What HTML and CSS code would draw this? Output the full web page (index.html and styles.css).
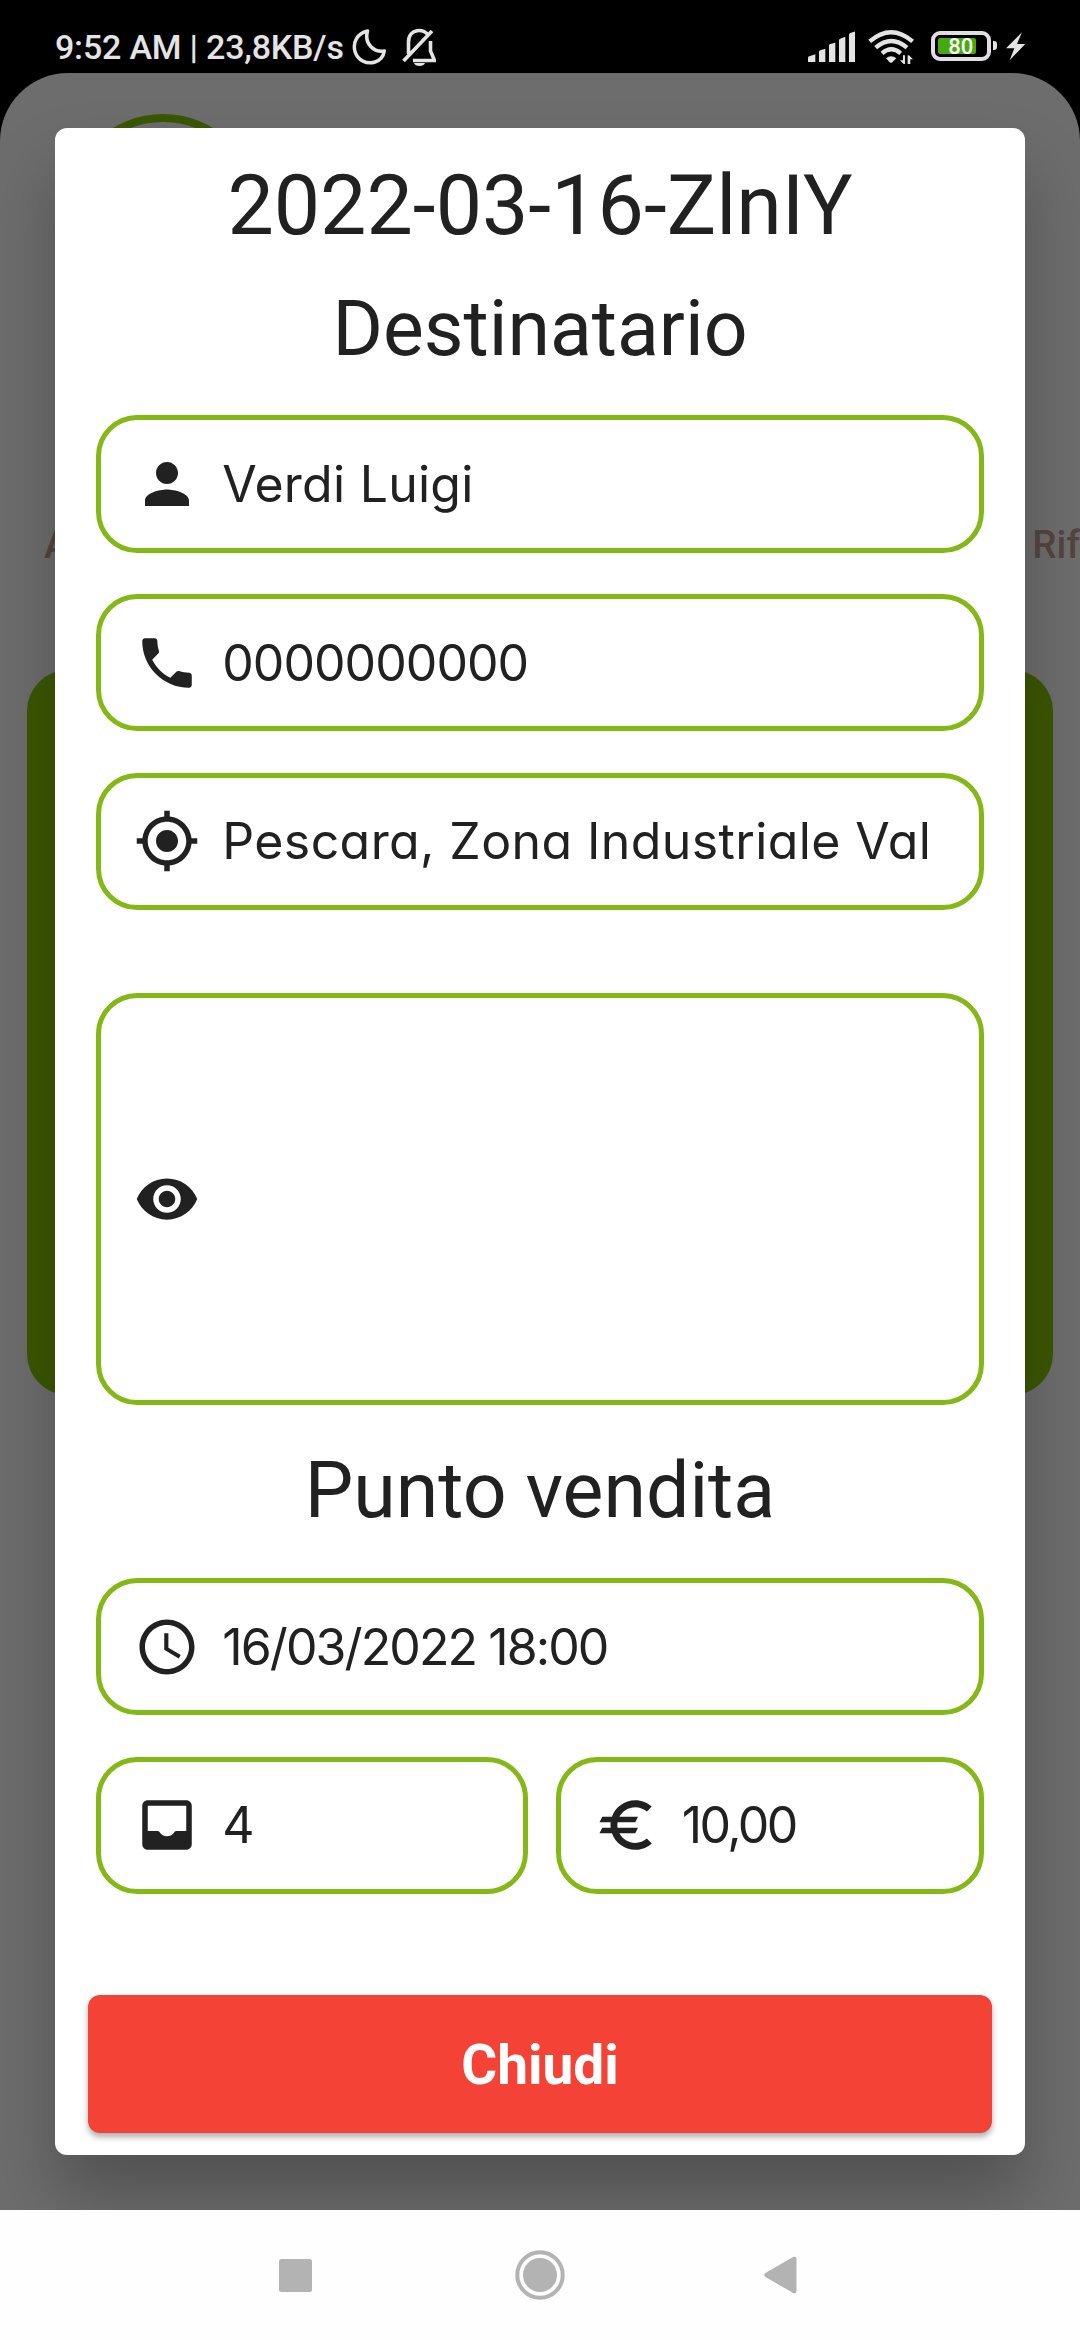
FILE: index.html
```html
<!DOCTYPE html>
<html lang="it">
<head>
    <meta charset="UTF-8">
    <meta name="viewport" content="width=device-width, initial-scale=1.0">
    <title>Ordine 2022-03-16-ZlnIY</title>
    <link rel="stylesheet" href="styles.css">
</head>
<body>
    <header class="statusbar">
        <span class="clock">9:52 AM | 23,8KB/s</span>
        <svg class="moon" viewBox="0 0 34 36"><path d="M15.500 2C5 4.500 .5 13.500 3 22.500c2.500 9 12 13 20 10.500 5.500-1.800 8.500-6 9.300-11C22 23.500 12 15 15.500 2z"/></svg>
        <svg class="bell" viewBox="0 0 34 38">
            <path class="line" d="M1.500 33 30 3M6.500 26V14C6.500 0 23 0 26 7.500M28.500 13v10l4 9.500H11"/>
            <path d="M12 35h11c-1 4-10 4-11 0z"/>
        </svg>
        <div class="indicators">
            <svg class="signal" viewBox="265 84 142 112"><path d="M265 186v-12q0-4 4-5l18-6v23zM298 186v-30q0-4 4-5l15-5v40zM328 186v-49q0-4 4-5l15-4v58zM358 186v-65q0-4 4-5l15-6v76zM388 186v-81q0-4 4-6l15-5v92z"/></svg>
            <svg class="wifi" viewBox="446 84 138 112">
                <path class="arc" d="M451 124q64-55 129 0M469 143q47-40 94 0M488 160q28-24 56 0"/>
                <path d="M500 175q15-12 31 0l-12 12q-4 3-8 0z"/>
                <path d="M542 181h9v-15h6v26h-4zM565 166h4l12 12h-8v14h-8z"/>
            </svg>
            <div class="battery"><span class="level">80</span></div>
            <svg class="bolt" viewBox="858 92 58 92"><path d="M906 96 858 144h25l-14 36 47-49h-25z"/></svg>
        </div>
    </header>

    <main class="app">
        <div class="page">
            <div class="avatar"></div>
            <nav class="tabs">
                <span>A</span>
                <span>Rif</span>
            </nav>
            <div class="card"></div>
        </div>

        <div class="overlay">
            <section class="dialog">
                <h1>2022-03-16-ZlnIY</h1>
                <h2>Destinatario</h2>

                <div class="fields">
                    <div class="field">
                        <svg class="icon" viewBox="0 0 24 24"><path d="M12 12c2.210 0 4-1.790 4-4s-1.790-4-4-4-4 1.790-4 4 1.790 4 4 4zm0 2c-2.670 0-8 1.340-8 4v2h16v-2c0-2.660-5.330-4-8-4z"/></svg>
                        <span class="name">Verdi Luigi</span>
                    </div>
                    <div class="field">
                        <svg class="icon" viewBox="0 0 24 24"><path d="M6.620 10.790c1.440 2.830 3.760 5.140 6.590 6.590l2.200-2.200c.27-.27.67-.36 1.020-.24 1.120.37 2.330.57 3.570.57.55 0 1 .45 1 1V20c0 .55-.45 1-1 1-9.390 0-17-7.610-17-17 0-.55.45-1 1-1h3.500c.55 0 1 .45 1 1 0 1.250.2 2.450.57 3.570.11.35.03.74-.25 1.020l-2.200 2.200z"/></svg>
                        <span class="phone">0000000000</span>
                    </div>
                    <div class="field">
                        <svg class="icon" viewBox="0 0 24 24"><path d="M12 8c-2.210 0-4 1.790-4 4s1.790 4 4 4 4-1.790 4-4-1.790-4-4-4zm8.940 3c-.46-4.170-3.770-7.480-7.940-7.940V1h-2v2.060C6.830 3.520 3.520 6.830 3.060 11H1v2h2.060c.46 4.170 3.770 7.480 7.940 7.940V23h2v-2.060c4.170-.46 7.480-3.770 7.940-7.940H23v-2h-2.060zM12 19c-3.870 0-7-3.130-7-7s3.130-7 7-7 7 3.130 7 7-3.130 7-7 7z"/></svg>
                        <span class="address">Pescara, Zona Industriale Val</span>
                    </div>
                    <div class="field notes">
                        <svg class="icon" viewBox="0 0 24 24"><path d="M12 4.500C7 4.500 2.730 7.610 1 12c1.730 4.390 6 7.500 11 7.500s9.270-3.110 11-7.500c-1.730-4.390-6-7.500-11-7.500zM12 17c-2.760 0-5-2.240-5-5s2.240-5 5-5 5 2.240 5 5-2.240 5-5 5zm0-8c-1.660 0-3 1.340-3 3s1.340 3 3 3 3-1.340 3-3-1.340-3-3-3z"/></svg>
                    </div>
                </div>

                <h2>Punto vendita</h2>

                <div class="fields">
                    <div class="field">
                        <svg class="icon" viewBox="0 0 24 24"><path d="M11.990 2C6.470 2 2 6.480 2 12s4.470 10 9.990 10C17.520 22 22 17.520 22 12S17.520 2 11.990 2zM12 20c-4.420 0-8-3.580-8-8s3.580-8 8-8 8 3.580 8 8-3.580 8-8 8zm.5-13H11v6l5.250 3.150.75-1.230-4.500-2.670z"/></svg>
                        <span class="date">16/03/2022 18:00</span>
                    </div>
                    <div class="row">
                        <div class="field">
                            <svg class="icon" viewBox="0 0 24 24"><path d="M19 3H5c-1.100 0-2 .9-2 2v14c0 1.100.9 2 2 2h14c1.100 0 2-.9 2-2V5c0-1.100-.9-2-2-2zm0 11.200h-3.500c-.4 0-.7.200-.9.500-.5.800-1.500 1.400-2.600 1.400s-2.100-.6-2.600-1.400c-.2-.3-.5-.5-.9-.5H5V5h14z"/></svg>
                            <span>4</span>
                        </div>
                        <div class="field">
                            <svg class="icon" viewBox="0 0 24 24"><path d="M15 18.500c-2.510 0-4.680-1.420-5.760-3.500H15l1-2H8.580c-.05-.33-.08-.66-.08-1s.03-.67.08-1H15l1-2H9.240C10.320 6.920 12.500 5.500 15 5.500c1.610 0 3.090.59 4.230 1.570L21 5.300C19.410 3.870 17.300 3 15 3c-3.920 0-7.240 2.510-8.480 6H3l-1 2h4.060c-.04.33-.06.66-.06 1s.02.67.06 1H3l-1 2h4.520c1.240 3.490 4.560 6 8.480 6 2.310 0 4.410-.87 6-2.300l-1.780-1.770c-1.130.98-2.600 1.570-4.220 1.570z"/></svg>
                            <span class="price">10,00</span>
                        </div>
                    </div>
                </div>

                <button class="closebtn">Chiudi</button>
            </section>
        </div>
    </main>

    <footer class="navbar">
        <svg class="recent" viewBox="0 0 33 33"><rect width="33" height="33" rx="2.500"/></svg>
        <svg class="home" viewBox="0 0 50 50"><circle class="ring" cx="25" cy="25" r="22.700"/><circle cx="25" cy="25" r="17"/></svg>
        <svg class="back" viewBox="0 0 33 38"><path d="M1 17.300 29.500.8Q32.500 0 32.500 3v32q0 3-3 2.200L1 20.700q-1.500-1.700 0-3.400z"/></svg>
    </footer>
</body>
</html>
```
FILE: styles.css
```css
:root {
    --green: #84b816;
    --darkgreen: #3b5700;
    --scrim: #6d6d6d;
    --textcolor: #212121;
    --status: #e4e4e4;
}
* {
    margin: 0;
    padding: 0;
    box-sizing: border-box;
}
body {
    display: flex;
    flex-direction: column;
    width: 1080px;
    height: 2340px;
    overflow: hidden;
    background-color: black;
    color: var(--textcolor);
    font-family: Roboto, sans-serif;
}
svg {
    display: block;
    flex: none;
}

/* status bar */
.statusbar {
    display: flex;
    align-items: center;
    height: 73px;
    padding: 20px 55px 0 55px;
    color: var(--status);
    fill: var(--status);
}
.clock {
    width: 297px;
    font-size: 34px;
    font-weight: 500;
    letter-spacing: -0.2px;
    white-space: nowrap;
}
.moon {
    width: 34px;
    height: 36px;
    fill: none;
    stroke: var(--status);
    stroke-width: 3.5;
    stroke-linejoin: round;
}
.bell {
    width: 34px;
    height: 38px;
    margin-left: 16px;
}
.line {
    fill: none;
    stroke: var(--status);
    stroke-width: 3.6;
}
.indicators {
    display: flex;
    align-items: center;
    margin-left: auto;
}
.signal {
    width: 47.3px;
    height: 37.3px;
    margin-right: 13px;
}
.wifi {
    width: 46px;
    height: 37.3px;
    margin-right: 16.3px;
}
.arc {
    fill: none;
    stroke: var(--status);
    stroke-width: 13;
}
.battery {
    position: relative;
    width: 60px;
    height: 30px;
    padding: 3px;
    border: 4px solid #e2dde0;
    border-radius: 9px;
    margin-right: 15px;
}
.battery::after {
    content: '';
    position: absolute;
    top: 6px;
    right: -10px;
    width: 4px;
    height: 9px;
    border-radius: 0 3px 3px 0;
    background-color: var(--status);
}
.level {
    display: block;
    width: 38px;
    height: 16px;
    padding-left: 8px;
    border-radius: 2px;
    background-color: #46aa0c;
    color: white;
    font-size: 22px;
    font-weight: 500;
    line-height: 18px;
    text-align: center;
}
.bolt {
    width: 19.3px;
    height: 30.6px;
}

/* page behind the dialog */
.app {
    position: relative;
    flex: 1;
    overflow: hidden;
    border-radius: 68px 68px 0 0;
    background-color: var(--scrim);
}
.page {
    padding: 41px 27px 0;
}
.avatar {
    width: 196px;
    height: 196px;
    margin-left: 38px;
    border: 8px solid var(--darkgreen);
    border-radius: 50%;
}
.tabs {
    display: flex;
    justify-content: space-between;
    margin: 211px -27px 101px 17px;
    color: #54453f;
    font-size: 38.5px;
    font-weight: 500;
    line-height: 48px;
}
.card {
    height: 725px;
    border-radius: 41px;
    background-color: var(--darkgreen);
}

/* dialog */
.overlay {
    position: absolute;
    inset: 0;
    padding: 55px;
}
.dialog {
    height: 2027px;
    padding: 28.5px 41.25px 0;
    border-radius: 12px;
    background-color: white;
    box-shadow: 0 42px 66px rgba(0, 0, 0, 0.25);
}
h1, h2 {
    font-weight: 400;
    text-align: center;
    white-space: nowrap;
}
h1 {
    font-size: 82.5px;
    line-height: 98px;
}
h2 {
    margin: 41.25px 0;
    font-size: 77px;
    line-height: 90.25px;
}
h1 + h2 {
    margin-top: 29px;
}
.fields {
    display: flex;
    flex-direction: column;
    gap: 41.25px;
}
.field {
    display: flex;
    align-items: center;
    gap: 22px;
    height: 137.5px;
    padding-left: 33px;
    border: 5.5px solid var(--green);
    border-radius: 41.25px;
    overflow: hidden;
    font-family: Inter, sans-serif;
    font-size: 50px;
    /* single-storey a */
    font-feature-settings: "cv11";
    white-space: nowrap;
}
.name {
    letter-spacing: 0.25px;
}
.phone {
    letter-spacing: -0.95px;
}
.address {
    letter-spacing: 0.4px;
}
.date {
    letter-spacing: -1.9px;
}
.price {
    letter-spacing: -2.6px;
}
.notes {
    height: 412.5px;
    margin-top: 41.25px;
}
.row {
    display: grid;
    grid-template-columns: 431.5px 1fr;
    gap: 28px;
}
.icon {
    width: 66px;
    height: 66px;
    fill: var(--textcolor);
}
.closebtn {
    display: block;
    width: 904px;
    height: 137.5px;
    margin: 101px 0 0 -8.25px;
    padding-top: 2px;
    border: none;
    border-radius: 12px;
    background-color: #f44336;
    box-shadow: 0 4px 6px rgba(0, 0, 0, 0.32);
    color: white;
    font-family: inherit;
    font-size: 55px;
    font-weight: 700;
}

/* navigation bar */
.navbar {
    display: flex;
    align-items: center;
    height: 130px;
    padding-left: 279px;
    background-color: #fefefe;
    fill: #b3b3b3;
}
.recent {
    width: 33px;
    height: 33px;
}
.home {
    width: 50px;
    height: 50px;
    margin: 0 199px 0 203px;
}
.ring {
    fill: none;
    stroke: #b3b3b3;
    stroke-width: 4;
}
.back {
    width: 33px;
    height: 38px;
}
```
